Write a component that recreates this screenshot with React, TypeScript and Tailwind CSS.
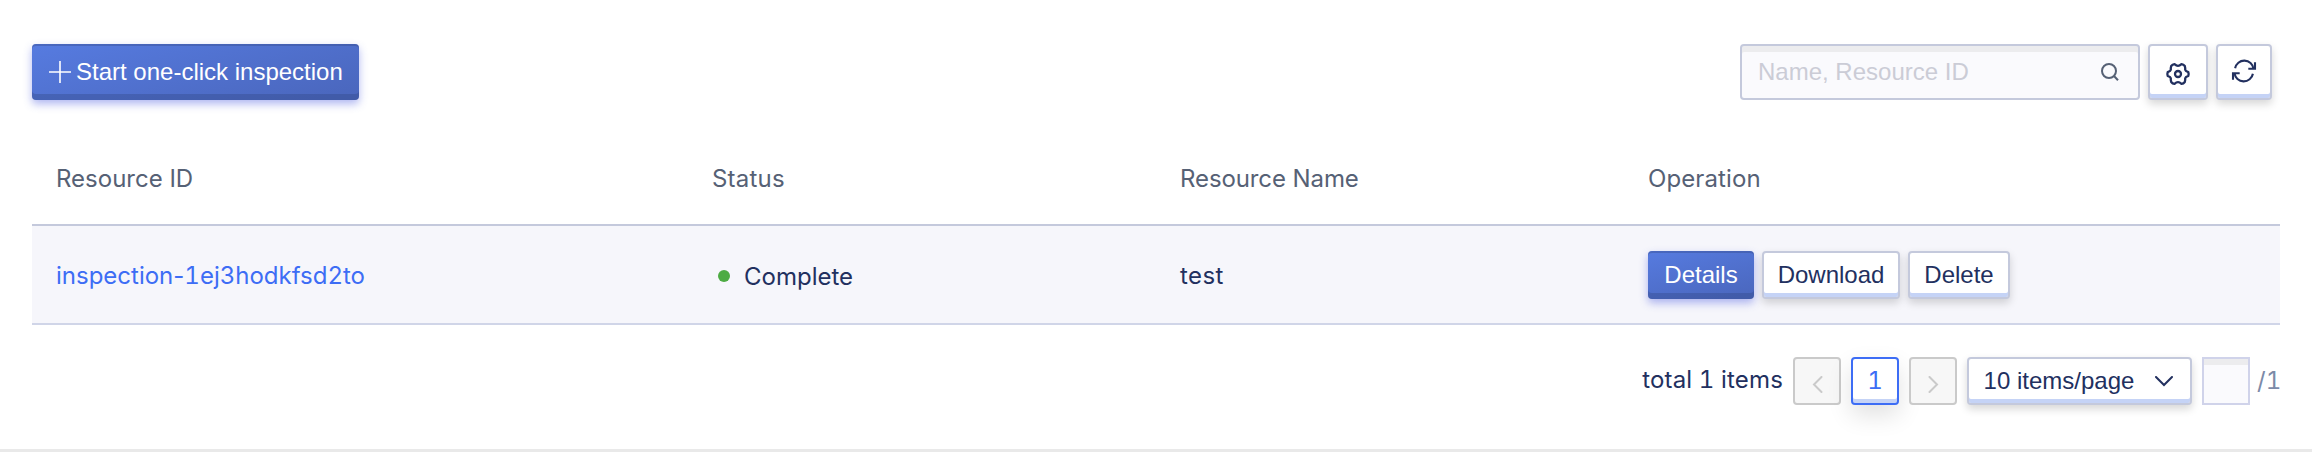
import type { ReactNode } from "react";

const sans = "font-['Liberation_Sans',Arial,sans-serif]";

const whiteButton =
  "flex shrink-0 items-center justify-center rounded-[4px] border-2 border-[#c4c9dc] bg-white text-[#22305f] shadow-[inset_0_-4px_0_0_#c5d3f6,0_4px_8px_0_rgba(0,0,0,0.16)]";
const blueButton =
  "flex shrink-0 items-center rounded-[4px] bg-linear-165 from-[#567be0] to-[#4a66bc] text-white shadow-[inset_0_2px_0_0_rgba(50,70,130,0.35),inset_0_-6px_0_0_rgba(50,70,130,0.35),0_4px_8px_0_rgba(80,95,225,0.45)]";

function PlusIcon() {
  return (
    <svg width="22" height="22" viewBox="0 0 22 22" fill="none" stroke="currentColor" strokeWidth="1.6">
      <path d="M11 0V22M0 11H22" />
    </svg>
  );
}

function SearchIcon() {
  return (
    <svg width="18" height="20" viewBox="0 0 18 20" fill="none" stroke="#566175" strokeWidth="2">
      <circle cx="8" cy="9" r="7" />
      <path d="M13 14l4 4.2" />
    </svg>
  );
}

function GearIcon() {
  return (
    <svg width="26" height="26" viewBox="-13 -13 26 26" fill="none" stroke="currentColor" strokeWidth="2.3" strokeLinejoin="round">
      <path d="M10.3 -1.9Q11 0 10.3 1.9Q7.4 3 7.2 4.2Q7.4 6 6.8 8Q5.5 9.7 3.5 9.9Q1.6 8.2 0 8.2Q-1.6 8.2 -3.5 9.9Q-5.5 9.7 -6.8 8Q-7.4 6 -7.2 4.2Q-7.4 3 -10.3 1.9Q-11 0 -10.3 -1.9Q-7.4 -3 -7.2 -4.2Q-7.4 -6 -6.8 -8Q-5.5 -9.7 -3.5 -9.9Q-1.6 -8.2 0 -8.2Q1.6 -8.2 3.5 -9.9Q5.5 -9.7 6.8 -8Q7.4 -6 7.2 -4.2Q7.4 -3 10.3 -1.9Z" />
      <circle r="3" />
    </svg>
  );
}

function RefreshIcon() {
  return (
    <svg width="26" height="24" viewBox="-13 -12 26 24" fill="none" stroke="currentColor" strokeWidth="2.1">
      <path d="M-8.9 -2.7A9.3 9.3 0 0 1 9.5 -2.2" />
      <path d="M11 -8.8V-2.2H4.3" />
      <path d="M8.9 2.7A9.3 9.3 0 0 1 -9.5 2.2" />
      <path d="M-11 8.8V2.2H-4.3" />
    </svg>
  );
}

function Chevron({ d, w, h, stroke }: { d: string; w: number; h: number; stroke: string }) {
  return (
    <svg width={w} height={h} viewBox={`0 0 ${w} ${h}`} fill="none" stroke={stroke} strokeWidth="2" strokeLinecap="round">
      <path d={d} />
    </svg>
  );
}

function PageStep({ children }: { children: ReactNode }) {
  return (
    <div className="flex size-12 items-center justify-center rounded-[4px] border-2 border-[#cacaca] bg-[#f7f7f7] pt-[6px]">
      {children}
    </div>
  );
}

const columns = "grid grid-cols-[656px_468px_468px_656px]";

export default function App() {
  return (
    <div className="flex h-[452px] w-[2312px] flex-col overflow-hidden border-b-[3px] border-[#e9e9e9] bg-white font-[Inter,sans-serif] text-[24px] leading-[32px] text-[#22305f]">
      <div className={`flex h-[100px] shrink-0 items-end justify-between pr-10 pl-8 ${sans}`}>
        <button className={`${blueButton} h-14 w-[327px] gap-[5px] pl-[17px] whitespace-nowrap`}>
          <PlusIcon />
          <span>Start one-click inspection</span>
        </button>
        <div className="flex gap-2">
          <div className="flex h-14 w-[400px] items-center justify-between rounded-[4px] border-2 border-[#c4c9dc] bg-[#fafafd] pr-[19px] pl-4 text-[#cbccd6] shadow-[inset_0_6px_0_0_#ececee]">
            <span>Name, Resource ID</span>
            <SearchIcon />
          </div>
          <button className={`${whiteButton} h-14 w-[60px] pt-1`}>
            <GearIcon />
          </button>
          <button className={`${whiteButton} size-14 pb-[2px]`}>
            <RefreshIcon />
          </button>
        </div>
      </div>

      <div className="mt-[30px] ml-8 w-[2248px] shrink-0">
        <div className={`${columns} h-24 items-center border-b-2 border-[#c4c9dc] pt-1 text-[#566175]`}>
          <div className="pl-6">Resource ID</div>
          <div className="pl-6 tracking-[0.2px]">Status</div>
          <div className="pl-6 tracking-[-0.1px]">Resource Name</div>
          <div className="pl-6 tracking-[0.1px]">Operation</div>
        </div>
        <div className={`${columns} h-[99px] items-center border-b-2 border-[#d0d5e8] bg-[#f6f6fb]`}>
          <div className="pt-[2px] pl-6 text-[#3d6df5]">
            inspection-<span className="tabular-nums">1ej3hodkfsd2to</span>
          </div>
          <div className="flex items-center gap-[14px] pl-[30px]">
            <span className="mt-[2px] size-3 rounded-full bg-[#4dab43]" />
            <span className="pt-1">Complete</span>
          </div>
          <div className="pt-[2px] pl-6 tracking-[0.4px]">test</div>
          <div className={`flex gap-2 pl-6 ${sans}`}>
            <button className={`${blueButton} h-12 w-[106px] justify-center`}>Details</button>
            <button className={`${whiteButton} h-12 w-[138px]`}>Download</button>
            <button className={`${whiteButton} h-12 w-[102px]`}>Delete</button>
          </div>
        </div>
      </div>

      <div className="mt-8 flex h-12 shrink-0 items-center justify-end gap-[10px] pr-[28px] tabular-nums">
        <span className="pb-[2px] tracking-[0.15px]">total 1 items</span>
        <PageStep>
          <Chevron d="M9.500 1L2 8.500L9.500 16" w={11} h={17} stroke="#cacaca" />
        </PageStep>
        <div className="flex size-12 items-center justify-center rounded-[4px] border-2 border-[#3d6df5] bg-white text-[#3d6df5] shadow-[inset_0_-4px_0_0_#c5d3f6,0_10px_24px_0_rgba(0,0,0,0.12)]">
          1
        </div>
        <PageStep>
          <Chevron d="M1.500 1L9 8.500L1.500 16" w={11} h={17} stroke="#cacaca" />
        </PageStep>
        <button className={`${whiteButton} h-12 w-[225px] pr-[2px] ${sans}`}>
          <span className="mr-[21px]">10 items/page</span>
          <Chevron d="M1 1L9 9L17 1" w={18} h={11} stroke="#22305f" />
        </button>
        <div className="size-12 border-2 border-[#d0d3ea] bg-[#fafafd] shadow-[inset_0_6px_0_0_#ececee]" />
        <span className="-ml-[4px] w-7 pl-px text-[#7c8aa8]">/1</span>
      </div>
    </div>
  );
}
